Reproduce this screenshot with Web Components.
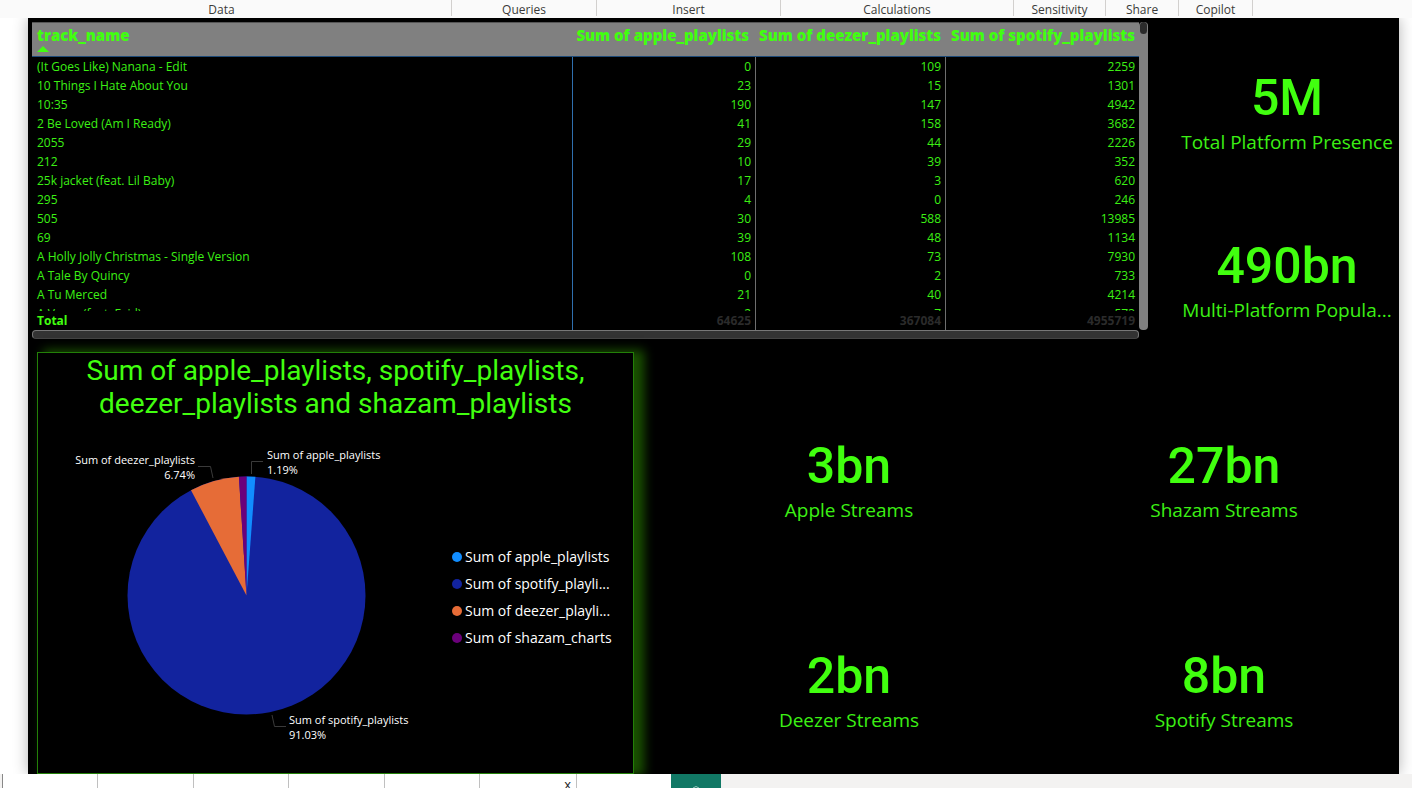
<!DOCTYPE html>
<html lang="en">
<head>
<meta charset="utf-8">
<title>Playlist report</title>
<style>
html, body { height: 100%; }
body { margin: 0; font-family: "Open Sans", "Noto Sans", sans-serif; background: #fff; }
</style>
</head>
<body>
<report-app></report-app>
<script>
const define = (name, html, setup) => {
  const tpl = document.createElement('template');
  tpl.innerHTML = html;
  customElements.define(name, class extends HTMLElement {
    connectedCallback() {
      if (this.shadowRoot) return;
      const root = this.attachShadow({ mode: 'open' });
      root.append(tpl.content.cloneNode(true));
      if (setup) setup(this, root);
    }
  });
};

define('ribbon-groups', `
<style>
:host { display: block; background: #fafafa; position: relative; }
ul { margin: 0; padding: 0; list-style: none; display: grid; height: 18px; overflow: hidden;
  grid-template-columns: 452fr 145fr 184fr 233fr 92fr 73fr 74fr 159fr; }
li { font-size: 12px; line-height: 20px; color: #3b3a39; text-align: center; white-space: nowrap;
  border-right: 1px solid #d2d0ce; height: 16px; }
li:first-child { padding-right: 8px; }
li:last-child { border: 0; }
</style>
<ul><li>Data</li><li>Queries</li><li>Insert</li><li>Calculations</li><li>Sensitivity</li><li>Share</li><li>Copilot</li><li></li></ul>`);

define('kpi-card', `
<style>
:host { display: flex; flex-direction: column; align-items: center; min-width: 0; color: #41ff0f; }
.value { font: 500 50px/60px Roboto, sans-serif; }
.label { font-size: 19px; line-height: 28px; white-space: nowrap; color: #3cf014; }
</style>
<div class="value"><slot name="value"></slot></div>
<div class="label"><slot></slot></div>`);

const rows = [
  ['(It Goes Like) Nanana - Edit', 0, 109, 2259],
  ['10 Things I Hate About You', 23, 15, 1301],
  ['10:35', 190, 147, 4942],
  ['2 Be Loved (Am I Ready)', 41, 158, 3682],
  ['2055', 29, 44, 2226],
  ['212', 10, 39, 352],
  ['25k jacket (feat. Lil Baby)', 17, 3, 620],
  ['295', 4, 0, 246],
  ['505', 30, 588, 13985],
  ['69', 39, 48, 1134],
  ['A Holly Jolly Christmas - Single Version', 108, 73, 7930],
  ['A Tale By Quincy', 0, 2, 733],
  ['A Tu Merced', 21, 40, 4214],
  ['A Veces (feat. Feid)', 2, 7, 573]
];

define('track-table', `
<style>
:host { display: grid; grid-template-columns: minmax(0, 1fr) 9px; min-width: 0; }
table, thead, tbody, tfoot { display: block; }
tr { display: grid; grid-template-columns: 541fr 183fr 190fr 193fr; }
th, td { padding: 0 4px 0 5px; text-align: right; white-space: nowrap; font-weight: 400;
  border-right: 1px solid #6e6e6e; }
th:first-child { text-align: left; border-right-color: #2f6fae; }
th:last-child, td:last-child { border-right: 0; }
thead { background: #808080; border-bottom: 1px solid #1d4a78; border-top: 1px solid #555; }
thead th { height: 33px; box-sizing: border-box; font-size: 15px; line-height: 24px; font-weight: 800; color: #41ff0f; border-color: transparent !important; }
thead svg { display: block; margin-top: -1px; }
tbody { height: 254px; overflow: hidden; }
tbody th, tbody td { font-size: 12px; line-height: 19px; color: #3cf014; }
tfoot th, tfoot td { font-size: 12px; line-height: 19px; font-weight: 700; color: #41ff0f; height: 19px; }
tfoot td { color: #2b2b2b; }
.v { background: #808080; border-radius: 4px; }
.v i { display: block; height: 12px; margin: 0 1px; border-radius: 4px; background: #2b2b2b; }
.h { height: 9px; box-sizing: border-box; background: #333; border: 1px solid #777; border-bottom-color: #444; border-radius: 4px; }
</style>
<table><thead><tr>
<th scope="col">track_name<svg width="12" height="6" viewBox="0 0 12 6" aria-hidden="true"><path d="M0 6L6 0L12 6Z" fill="#41ff0f"/></svg></th>
<th scope="col">Sum of apple_playlists</th><th scope="col">Sum of deezer_playlists</th><th scope="col">Sum of spotify_playlists</th>
</tr></thead><tbody></tbody>
<tfoot><tr><th scope="row">Total</th><td>64625</td><td>367084</td><td>4955719</td></tr></tfoot></table>
<div class="v"><i></i></div>
<div class="h"></div>`, (host, root) => {
  const body = root.querySelector('tbody');
  for (const [name, ...nums] of rows) {
    const tr = document.createElement('tr');
    const th = document.createElement('th');
    th.scope = 'row';
    th.textContent = name;
    tr.append(th);
    for (const n of nums) {
      const td = document.createElement('td');
      td.textContent = n;
      tr.append(td);
    }
    body.append(tr);
  }
});

define('playlist-pie', `
<style>
:host { display: flex; flex-direction: column; min-width: 0; border: 1px solid #238008; background: #000;
  box-shadow: 8px 0 10px 2px #1a5200; }
h2 { margin: 0; padding: 1px 20px 0; text-align: center; font: 400 28px/33px Roboto, sans-serif; color: #41ff0f; }
.body { display: flex; align-items: flex-start; }
svg { flex: none; display: block; }
text { font-size: 11px; fill: #fff; }
ul { list-style: none; margin: 123px 0 0; padding: 0; }
li { display: flex; align-items: center; gap: 3px; font-size: 14px; line-height: 27px; color: #fff; white-space: nowrap; }
li i { width: 10px; height: 10px; border-radius: 50%; background: var(--c); }
</style>
<h2>Sum of apple_playlists, spotify_playlists,<br>deezer_playlists and shazam_playlists</h2>
<div class="body">
<svg width="414" height="345" viewBox="38 420 414 345" role="img" aria-label="Share of playlists by platform">
<circle cx="246.500" cy="595.500" r="119" fill="#12239e"/>
<path d="M246.500 595.500V476.500A119 119 0 0 1 255.400 476.800Z" fill="#118dff"/>
<path d="M246.500 595.500L191 490.200A119 119 0 0 1 238.900 476.700Z" fill="#e66c37"/>
<path d="M246.500 595.500L238.900 476.700A119 119 0 0 1 246.500 476.500Z" fill="#6b007b"/>
<path d="M263 461.500H251.500V474M198 466.500H210.500L213 478M272 715L274.500 726.500H286" fill="none" stroke="#3a3a3a"/>
<text x="195" y="464" text-anchor="end">Sum of deezer_playlists</text>
<text x="195" y="479" text-anchor="end">6.74%</text>
<text x="267" y="459">Sum of apple_playlists</text>
<text x="267" y="474">1.19%</text>
<text x="289" y="724">Sum of spotify_playlists</text>
<text x="289" y="739">91.03%</text>
</svg>
<ul>
<li><i style="--c:#118dff"></i>Sum of apple_playlists</li>
<li><i style="--c:#12239e"></i>Sum of spotify_playli...</li>
<li><i style="--c:#e66c37"></i>Sum of deezer_playli...</li>
<li><i style="--c:#6b007b"></i>Sum of shazam_charts</li>
</ul>
</div>`);

define('page-tabs', `
<style>
:host { display: block; background: #f3f2f1; position: relative; }
nav { display: grid; grid-template-columns: 3fr 95fr 96fr 95fr 96fr 95fr 97fr 94fr 50fr 691fr; height: 14px; overflow: hidden; }
button { all: unset; box-sizing: border-box; height: 14px; background: #fff; border-right: 1px solid #c0c0c0; }
.first { background: #f3f2f1; border-color: #888; }
.last { border: 0; }
.open { text-align: right; font-size: 13px; line-height: 20px; padding-right: 5px; color: #222; height: 20px; }
.add { background: #117865; display: grid; justify-items: center; align-items: end; border: 0; }
</style>
<nav aria-label="Pages"><button class="first" aria-label="Scroll"></button>
<button aria-label="Page 1"></button><button aria-label="Page 2"></button><button aria-label="Page 3"></button><button aria-label="Page 4"></button><button aria-label="Page 5"></button><button class="open">x</button><button class="last" aria-label="Page 7"></button>
<button class="add" aria-label="New page"><svg width="6" height="2" viewBox="0 0 6 2"><path d="M0 2Q3-1 6 2" fill="none" stroke="#9cc9c0"/></svg></button></nav>`);

define('report-app', `
<style>
:host { display: grid; grid-template-rows: auto 1fr auto; min-height: 100vh; overflow: hidden; }
main { margin: 0 13px 0 28px; background: #000; box-shadow: 0 0 14px rgba(0,0,0,.3);
  display: grid; grid-template-rows: auto 1fr; row-gap: 13px; padding-top: 4px; }
.top { display: grid; grid-template-columns: 1116fr 224fr; column-gap: 27px; padding-left: 4px; }
.side { display: grid; align-content: start; row-gap: 80px; padding-top: 46px; min-width: 0; }
.bottom { display: grid; grid-template-columns: 612fr 360fr 350fr; column-gap: 20px; padding-left: 9px; }
playlist-pie { margin-right: 15px; }
.streams { display: grid; align-content: start; row-gap: 122px; padding-top: 84px; min-width: 0; }
</style>
<ribbon-groups></ribbon-groups>
<main>
<div class="top">
<track-table></track-table>
<div class="side">
<kpi-card><span slot="value">5M</span>Total Platform Presence</kpi-card>
<kpi-card><span slot="value">490bn</span>Multi-Platform Popula...</kpi-card>
</div>
</div>
<div class="bottom">
<playlist-pie></playlist-pie>
<div class="streams">
<kpi-card><span slot="value">3bn</span>Apple Streams</kpi-card>
<kpi-card><span slot="value">2bn</span>Deezer Streams</kpi-card>
</div>
<div class="streams">
<kpi-card><span slot="value">27bn</span>Shazam Streams</kpi-card>
<kpi-card><span slot="value">8bn</span>Spotify Streams</kpi-card>
</div>
</div>
</main>
<page-tabs></page-tabs>`);
</script>
</body>
</html>
